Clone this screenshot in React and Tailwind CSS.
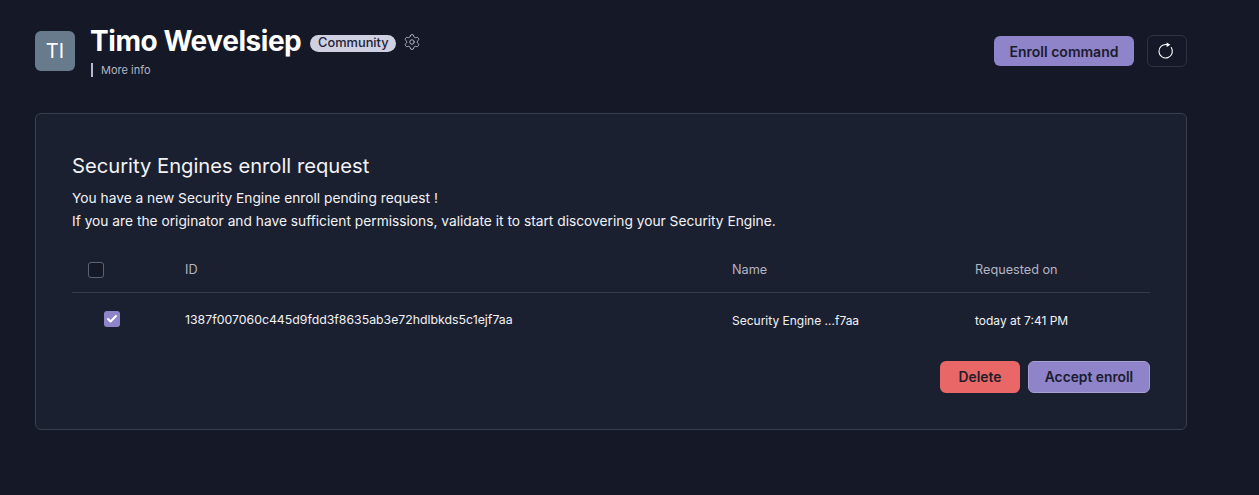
import React from "react";
import { Settings, Check } from "lucide-react";

const columns = "grid grid-cols-[113px_547px_243px_1fr] items-center";

const App = () => {
  return (
    <div className="h-[495px] w-[1259px] overflow-hidden bg-[#141827] pl-[35px] pr-[72px] pt-[25px] font-['Inter',sans-serif] text-white">
      {/* header */}
      <div className="flex h-[88px] items-start justify-between">
        <div className="flex items-start">
          <div className="mt-[6px] flex h-10 w-10 items-center justify-center rounded-md bg-[#687b8c] text-[20px] text-white">
            TI
          </div>
          <div className="ml-[15px]">
            <div className="flex items-center">
              <h1 className="text-[28px] leading-[32px] font-bold tracking-[-0.45px] text-white">Timo Wevelsiep</h1>
              <span className="mt-1 ml-[9px] flex h-[17px] w-[86px] items-center justify-center rounded-full bg-[#cfd1e3] text-[12.8px] font-medium text-[#1e2233]">
                Community
              </span>
              <Settings className="mt-[2px] ml-[7px] h-[18px] w-[18px] text-[#b9bccb]" strokeWidth={1.25} />
            </div>
            <div className="mt-[6px] ml-px flex h-[14px] items-center border-l-2 border-[#b5b8d0] pl-2 text-[11px] text-[#b3b5c3]">
              More info
            </div>
          </div>
        </div>
        <div className="mt-[10px] flex items-center gap-[13px]">
          <button className="h-[30px] w-[140px] rounded-md bg-[#8f83c9] text-[14px] font-semibold text-[#1a1c2e]">
            Enroll command
          </button>
          <button className="flex h-8 w-10 items-center justify-center rounded-md border border-[#2e3342]">
            <svg viewBox="0 0 24 24" className="h-[18px] w-[18px] text-white" fill="none">
              <path d="M17.7 7.3A9 9 0 1 1 12 3.5" stroke="currentColor" strokeWidth="1.5" strokeLinecap="round" />
              <path d="M11.5 0.5L16.5 3.5L11.5 6.5Z" fill="currentColor" />
            </svg>
          </button>
        </div>
      </div>

      {/* enroll card */}
      <div className="h-[317px] rounded-md border border-[#3a3f4e] bg-[#1b2031] px-9 pt-10">
        <h2 className="text-[20.2px] leading-6 font-normal text-[#f2f2f5]">Security Engines enroll request</h2>
        <div className="mt-[9px] text-[13.75px] leading-[23px] text-[#f2f2f5]">
          <p>You have a new Security Engine enroll pending request !</p>
          <p>If you are the originator and have sufficient permissions, validate it to start discovering your Security Engine.</p>
        </div>

        <div className="mt-[15px] w-[1078px]">
          <div className={`${columns} h-[45px] border-b border-[#363b4a] text-[12.7px] text-[#b3b5c3]`}>
            <div className="pl-4">
              <div className="h-4 w-4 rounded-[3px] border border-[#5d6377] bg-[#141827]" />
            </div>
            <div>ID</div>
            <div>Name</div>
            <div>Requested on</div>
          </div>
          <div className={`${columns} h-[53px] pt-[2px] text-[12px] text-[#f2f2f5]`}>
            <div className="pl-8">
              <div className="-mt-[3px] flex h-4 w-4 items-center justify-center rounded-[3px] bg-[#8f83c9]">
                <Check className="h-3 w-3 text-white" strokeWidth={4} />
              </div>
            </div>
            <div className="text-[12.3px]">1387f007060c445d9fdd3f8635ab3e72hdlbkds5c1ejf7aa</div>
            <div>Security Engine ...f7aa</div>
            <div>today at 7:41 PM</div>
          </div>
        </div>

        <div className="mt-[15px] flex w-[1078px] justify-end gap-2">
          <button className="h-8 w-20 rounded-md bg-[#e96767] text-[13.8px] font-semibold text-[#1e1e2a]">Delete</button>
          <button className="h-8 w-[122px] rounded-md border border-[#a89fd6] bg-[#8f83c9] text-[13.8px] font-semibold text-[#1a1c2e]">
            Accept enroll
          </button>
        </div>
      </div>
    </div>
  );
};

export default App;
